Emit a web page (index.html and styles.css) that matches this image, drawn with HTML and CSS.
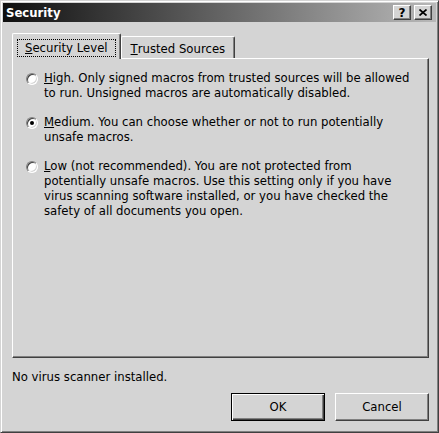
FILE: index.html
```html
<!DOCTYPE html>
<html lang="en">
<head>
  <meta charset="UTF-8">
  <title>Security</title>
  <link rel="stylesheet" href="styles.css">
</head>
<body>

  <div class="window">
    <div class="titlebar">
      <span class="title">Security</span>
      <div class="caption-buttons">
        <span class="cap-btn">?</span>
        <span class="cap-btn">
          <svg width="8" height="7" viewBox="0 0 8 7">
            <path d="M0.5 0.5 L7.5 6.5 M7.5 0.5 L0.5 6.5" stroke="#000" stroke-width="1.7" fill="none"/>
          </svg>
        </span>
      </div>
    </div>

    <div class="content">
      <div class="tabs">
        <div class="tab active"><span class="focus"><u>S</u>ecurity Level</span></div>
        <div class="tab"><u>T</u>rusted Sources</div>
      </div>

      <div class="panel">
        <div class="option">
          <span class="radio"></span>
          <span class="label"><u>H</u>igh. Only signed macros from trusted sources will be allowed<br>to run. Unsigned macros are automatically disabled.</span>
        </div>
        <div class="option">
          <span class="radio checked"></span>
          <span class="label"><u>M</u>edium. You can choose whether or not to run potentially<br>unsafe macros.</span>
        </div>
        <div class="option">
          <span class="radio"></span>
          <span class="label"><u>L</u>ow (not recommended). You are not protected from<br>potentially unsafe macros. Use this setting only if you have<br>virus scanning software installed, or you have checked the<br>safety of all documents you open.</span>
        </div>
      </div>

      <div class="status">No virus scanner installed.</div>

      <div class="buttons">
        <button class="btn default">OK</button>
        <button class="btn">Cancel</button>
      </div>
    </div>
  </div>

</body>
</html>
```

FILE: styles.css
```css
* {
  box-sizing: border-box;
}
body {
  margin: 0;
  background: #d4d4d4;
  font-family: "DejaVu Sans", sans-serif;
  font-size: 11.7px;
  color: #000;
}
.window {
  width: 439px;
  height: 433px;
  border: 1px solid;
  border-color: #d4d4d4 #404040 #404040 #d4d4d4;
  box-shadow: inset 1px 1px #fff, inset -1px -1px #808080;
  padding: 2px;
  display: flex;
  flex-direction: column;
}
.titlebar {
  height: 19px;
  background: linear-gradient(to right, #0f0f0f, #b8b8b8);
  display: flex;
  align-items: center;
  justify-content: space-between;
  padding: 0 4px 0 3px;
}
.title {
  color: #fff;
  font-weight: bold;
}
.caption-buttons {
  display: flex;
  gap: 3px;
}
.cap-btn {
  width: 18px;
  height: 15px;
  background: #d4d4d4;
  border: 1px solid;
  border-color: #fff #404040 #404040 #fff;
  box-shadow: inset -1px -1px #808080;
  display: flex;
  align-items: center;
  justify-content: center;
  font-weight: bold;
  font-size: 12px;
}
.content {
  flex: 1;
  padding: 11px 7px 9px 9px;
  display: flex;
  flex-direction: column;
}
.tabs {
  display: flex;
  align-items: flex-end;
  height: 25px;
}
.tab {
  height: 22px;
  padding: 2px 9px 0 9px;
  border-top: 1px solid #fff;
  border-left: 1px solid #fff;
  border-right: 1px solid #404040;
  box-shadow: inset -1px 0 #808080;
  border-radius: 2px 2px 0 0;
  display: flex;
  align-items: center;
}
.tab.active {
  height: 26px;
  margin-bottom: -1px;
  padding: 3px 4px 0 4px;
  position: relative;
  z-index: 1;
  background: #d4d4d4;
}
.focus {
  border: 1px dotted #000;
  padding: 1px 7px;
}
.panel {
  height: 300px;
  border: 1px solid;
  border-color: #fff #404040 #404040 #fff;
  box-shadow: inset -1px -1px #808080;
  padding: 12px 6px 0 13px;
}
.option {
  display: flex;
  gap: 6px;
  line-height: 15px;
  margin-bottom: 14px;
  white-space: nowrap;
}
.radio {
  flex: none;
  width: 12px;
  height: 12px;
  margin-top: 2px;
  border-radius: 50%;
  background: #fff;
  border: 1px solid;
  border-color: #808080 #fff #fff #808080;
  box-shadow: inset 1px 1px #404040, inset -1px -1px #d4d4d4;
  display: flex;
  align-items: center;
  justify-content: center;
}
.radio.checked::after {
  content: "";
  width: 4px;
  height: 4px;
  border-radius: 50%;
  background: #000;
}
.status {
  margin-top: 12px;
  line-height: 15px;
}
.buttons {
  margin-top: 8px;
  display: flex;
  justify-content: flex-end;
  gap: 10px;
}
.btn {
  width: 94px;
  height: 28px;
  font-family: "DejaVu Sans", sans-serif;
  font-size: 11.7px;
  color: #000;
  background: #d4d4d4;
  border: 1px solid;
  border-color: #fff #404040 #404040 #fff;
  box-shadow: inset -1px -1px #808080;
}
.btn.default {
  border-color: #000;
  box-shadow: inset 1px 1px #fff, inset -1px -1px #404040, inset -2px -2px #808080;
}
```
